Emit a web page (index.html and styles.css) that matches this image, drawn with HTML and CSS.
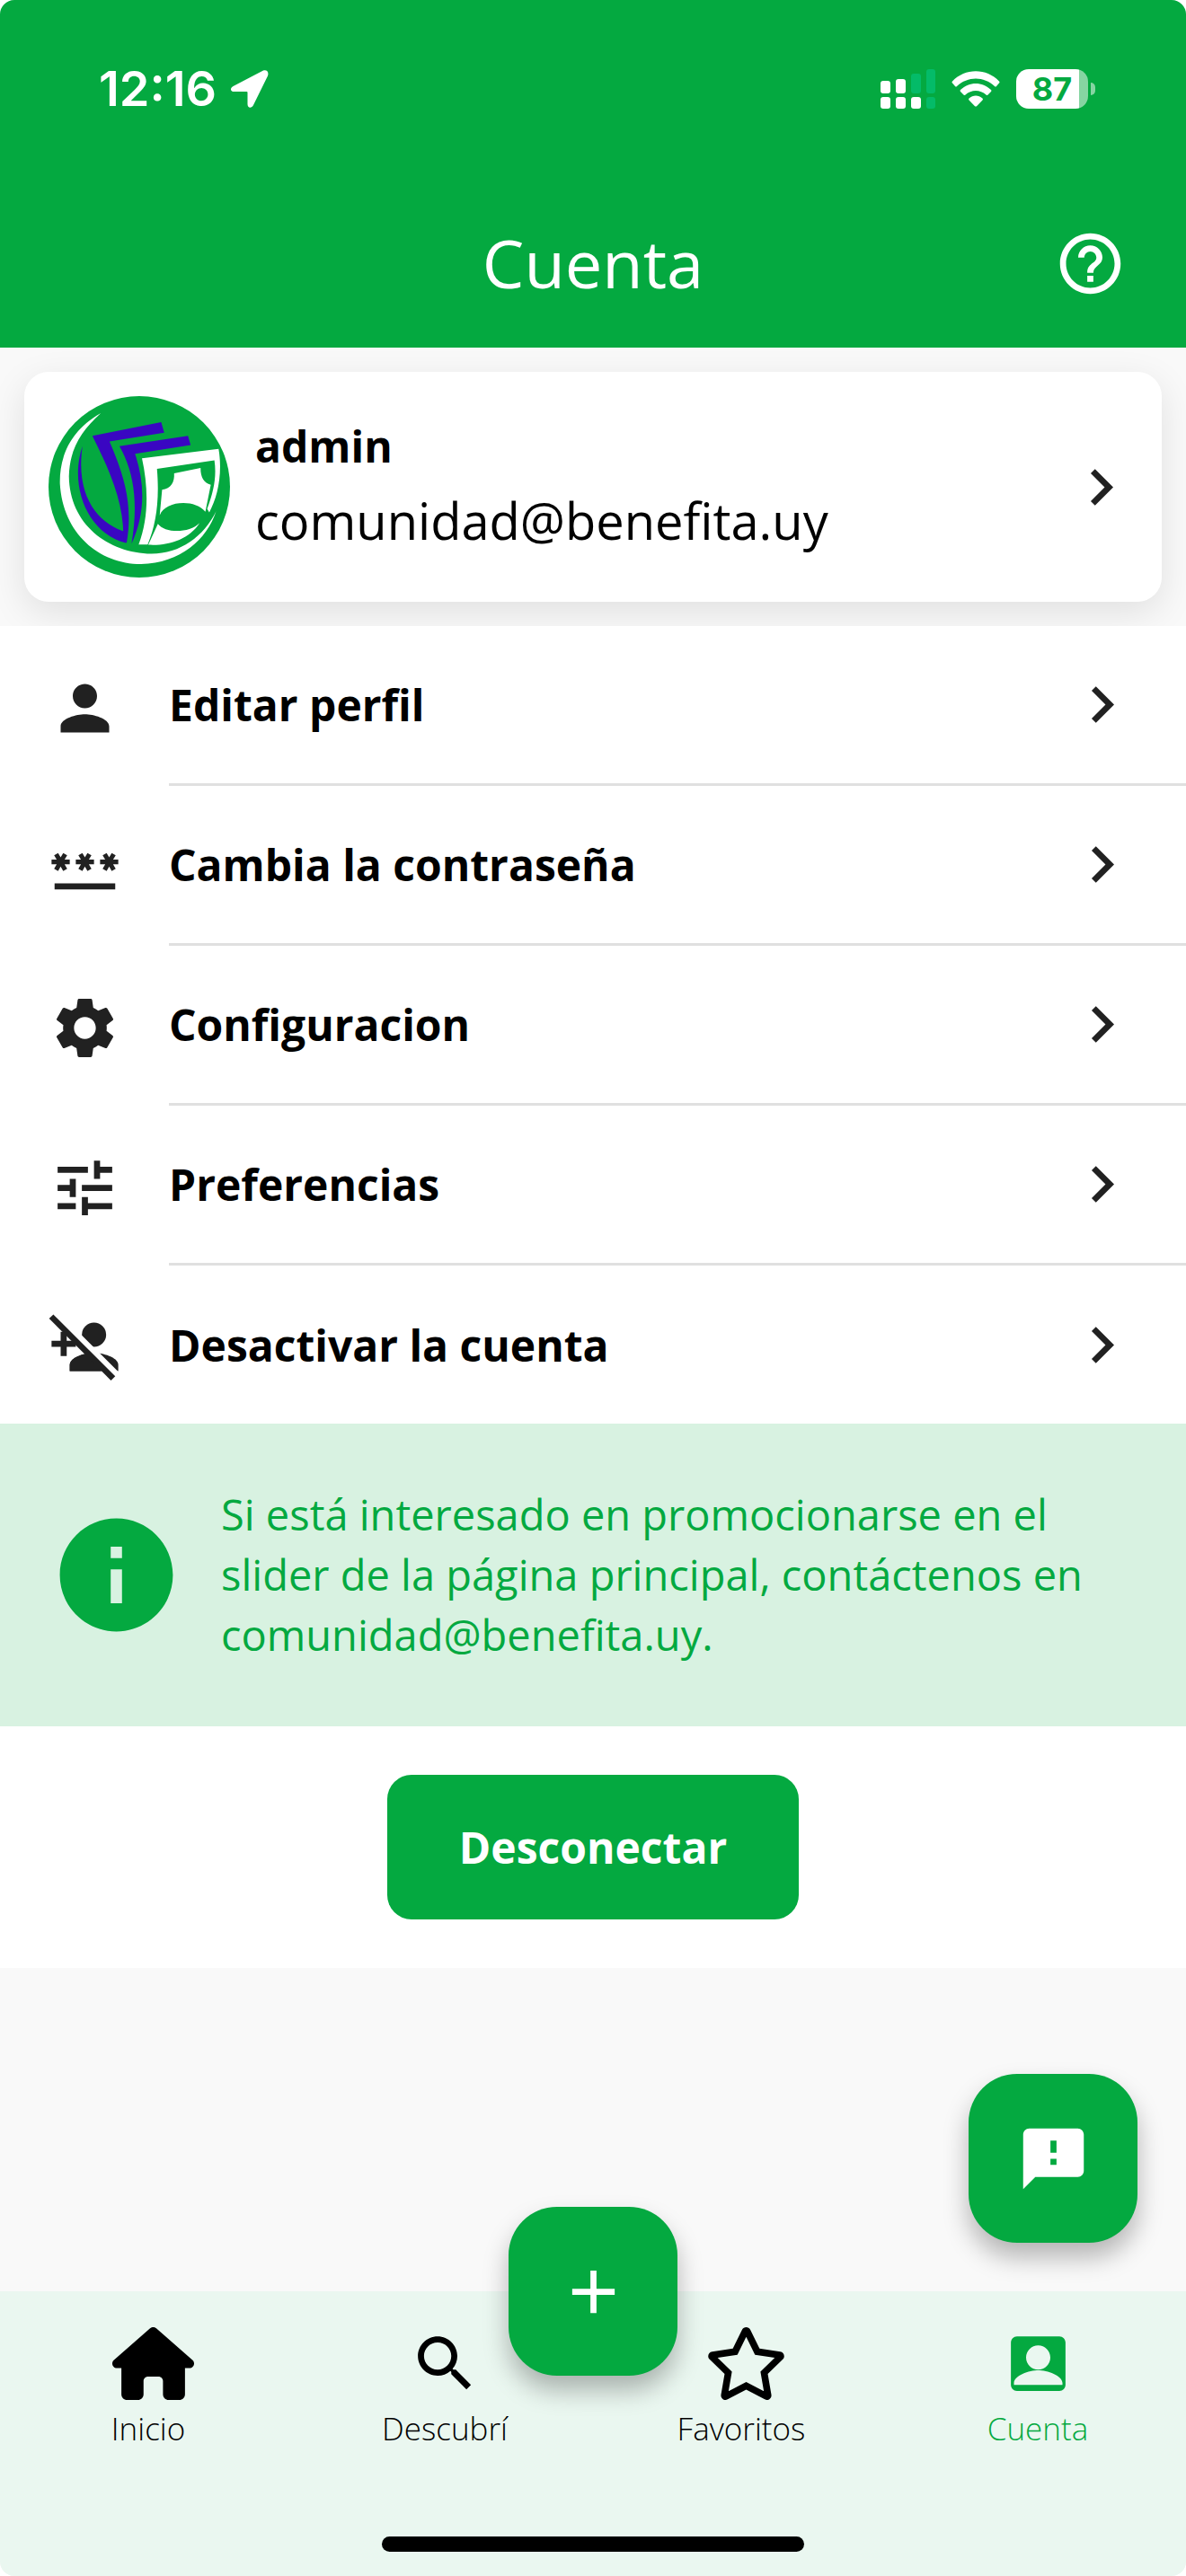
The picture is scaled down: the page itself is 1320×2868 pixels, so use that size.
FILE: index.html
```html
<!DOCTYPE html>
<html lang="es">
<head>
  <meta charset="UTF-8">
  <meta name="viewport" content="width=device-width, initial-scale=1">
  <title>Cuenta</title>
  <link rel="stylesheet" href="styles.css">
</head>
<body>
  <!-- Shared chevron used by the card and the menu rows -->
  <svg class="sprite" aria-hidden="true">
    <symbol id="chevron" viewBox="0 0 24 24">
      <path d="M10 6 8.59 7.41 13.17 12l-4.58 4.59L10 18l6-6z"/>
    </symbol>
  </svg>

  <div class="app">
    <header class="header">
      <div class="status-bar">
        <div class="status-left">
          <span class="time">12:16</span>
          <svg class="location" viewBox="0 0 42 42" aria-hidden="true">
            <path d="M35.500.8 2.500 18C-1.500 20.500-.5 24 3.500 24H17.500Q18.500 24 18.500 25V38C18.500 42.500 23 43 25 39L41 6.500C42.500 2.500 40-1 35.500.8z"/>
          </svg>
        </div>
        <div class="status-right">
          <svg class="signal" viewBox="0 0 61 44" aria-hidden="true">
            <g fill="#fff">
              <rect x="0" y="13" width="11" height="14" rx="3"/>
              <rect x="17" y="11" width="11" height="16" rx="3"/>
              <rect x="0" y="31" width="11" height="13" rx="3"/>
              <rect x="17" y="31" width="11" height="13" rx="3"/>
              <rect x="34" y="31" width="11" height="13" rx="3"/>
            </g>
            <g fill="#04bb68">
              <rect x="34" y="5" width="11" height="22" rx="3"/>
              <rect x="51" y="0" width="10" height="27" rx="3"/>
              <rect x="51" y="31" width="10" height="13" rx="3"/>
            </g>
          </svg>
          <svg class="wifi" viewBox="0 0 54 40" aria-hidden="true">
            <path d="M1 11.500C15-3.500 39-3.500 53 11.500Q54 12.500 53 13.500L50 17Q49 18 48 17C36 5.500 18 5.500 6 17Q5 18 4 17L1 13.500Q0 12.500 1 11.500z"/>
            <path d="M10 21C20 11.500 34 11.500 44 21Q45 22 44 23L40.500 26.500Q39.500 27.500 38.500 26.500C32 20.500 22 20.500 15.500 26.500Q14.500 27.500 13.500 26.500L10 23Q9 22 10 21z"/>
            <path d="M19.500 30.500C24 26.500 30 26.500 34.500 30.500Q35.500 31.500 34.500 32.500L28 39.200Q27 40 26 39.200L19.500 32.500Q18.500 31.500 19.500 30.500z"/>
          </svg>
          <div class="battery"><span class="battery-level">87</span></div>
        </div>
      </div>
      <div class="title-bar">
        <h1>Cuenta</h1>
        <button class="help" type="button" aria-label="Ayuda">
          <svg class="icon" viewBox="0 0 24 24">
            <path d="M11 18h2v-2h-2v2zm1-16C6.480 2 2 6.480 2 12s4.480 10 10 10 10-4.480 10-10S17.520 2 12 2zm0 18c-4.410 0-8-3.590-8-8s3.590-8 8-8 8 3.590 8 8-3.590 8-8 8zm0-14c-2.210 0-4 1.790-4 4h2c0-1.100.9-2 2-2s2 .9 2 2c0 2-3 1.750-3 5h2c0-2.250 3-2.500 3-5 0-2.210-1.790-4-4-4z"/>
          </svg>
        </button>
      </div>
    </header>

    <main>
      <section class="profile">
        <a class="card" href="#perfil">
          <svg class="avatar" viewBox="42 33 604 604" aria-hidden="true">
            <circle cx="344" cy="335" r="302" fill="#04a940"/>
            <g fill="#fff">
              <path d="M216 90C110 150 78 240 80 325C90 490 210 592 350 592C480 590 570 510 600 416C560 500 480 558 385 558C240 556 112 460 110 300C112 210 150 150 216 90z"/>
              <path d="M353 240L608 209C622 290 605 370 577 420L570 408C592 350 602 300 594 247L403 275C412 380 400 460 372 527L342 527C375 440 375 340 353 240z"/>
              <path d="M460 290L548 272C548 305 560 322 582 328L564 418C530 375 430 380 412 430L420 345C450 340 462 320 460 290z"/>
              <path d="M406 458C430 490 510 490 545 455C510 510 440 532 374 528z"/>
            </g>
            <g fill="#3a06c2">
              <path d="M155 200C110 330 170 490 300 522L300 486C210 460 130 370 155 200z"/>
              <path d="M188 165L417 120L427 155L245 184C290 290 325 390 302 522L291 512C295 390 245 280 188 165z"/>
              <path d="M278 200L506 165L515 196L330 225C365 330 362 430 318 525C340 400 330 290 278 200z"/>
            </g>
          </svg>
          <span class="card-text">
            <strong class="name">admin</strong>
            <span class="email">comunidad@benefita.uy</span>
          </span>
          <svg class="icon"><use href="#chevron"/></svg>
        </a>
      </section>

      <nav class="menu">
        <a class="menu-item" href="#editar">
          <svg class="icon menu-icon" viewBox="0 0 24 24">
            <path d="M12 12c2.210 0 4-1.790 4-4s-1.790-4-4-4-4 1.790-4 4 1.790 4 4 4zm0 2c-2.670 0-8 1.340-8 4v2h16v-2c0-2.660-5.330-4-8-4z"/>
          </svg>
          <span class="menu-label">Editar perfil<svg class="icon"><use href="#chevron"/></svg></span>
        </a>
        <a class="menu-item" href="#clave">
          <svg class="icon menu-icon" viewBox="0 0 24 24">
            <path d="M2 17h20v2H2v-2zm1.150-4.050L4 11.470l.85 1.480 1.300-.75-.85-1.480H7v-1.500H5.300l.85-1.470L4.850 7 4 8.470 3.150 7l-1.300.75.85 1.470H1v1.500h1.700l-.85 1.480 1.300.75zm6.700-.75l1.300.75.85-1.480.85 1.480 1.300-.75-.85-1.480H15v-1.500h-1.700l.85-1.470-1.300-.75L12 8.470 11.150 7l-1.300.75.85 1.470H9v1.500h1.700l-.85 1.480zM23 9.220h-1.700l.85-1.470-1.300-.75L20 8.470 19.150 7l-1.300.75.85 1.470H17v1.500h1.700l-.85 1.480 1.300.75.85-1.480.85 1.480 1.300-.75-.85-1.480H23v-1.500z"/>
          </svg>
          <span class="menu-label">Cambia la contraseña<svg class="icon"><use href="#chevron"/></svg></span>
        </a>
        <a class="menu-item" href="#configuracion">
          <svg class="icon menu-icon" viewBox="0 0 24 24">
            <path d="M19.140 12.940c.04-.3.060-.61.060-.94 0-.32-.02-.64-.07-.94l2.030-1.580c.18-.14.23-.41.12-.61l-1.920-3.320c-.12-.22-.37-.29-.59-.22l-2.390.96c-.5-.38-1.030-.7-1.620-.94l-.36-2.540c-.04-.24-.24-.41-.48-.41h-3.840c-.24 0-.43.17-.47.41l-.36 2.540c-.59.24-1.130.57-1.620.94l-2.390-.96c-.22-.08-.47 0-.59.22L2.740 8.870c-.12.21-.08.47.12.61l2.030 1.580c-.05.3-.09.63-.09.94s.02.64.07.94l-2.030 1.580c-.18.14-.23.41-.12.61l1.920 3.320c.12.22.37.29.59.22l2.390-.96c.5.38 1.030.7 1.620.94l.36 2.540c.05.24.24.41.48.41h3.840c.24 0 .44-.17.47-.41l.36-2.540c.59-.24 1.130-.56 1.620-.94l2.390.96c.22.080.47 0 .59-.22l1.920-3.320c.12-.22.070-.47-.12-.61l-2.010-1.580zM12 15.600c-1.980 0-3.600-1.620-3.600-3.600s1.620-3.600 3.600-3.600 3.600 1.620 3.600 3.600-1.620 3.600-3.600 3.600z"/>
          </svg>
          <span class="menu-label">Configuracion<svg class="icon"><use href="#chevron"/></svg></span>
        </a>
        <a class="menu-item" href="#preferencias">
          <svg class="icon menu-icon" viewBox="0 0 24 24">
            <path d="M3 17v2h6v-2H3zM3 5v2h10V5H3zm10 16v-2h8v-2h-8v-2h-2v6h2zM7 9v2H3v2h4v2h2V9H7zm14 4v-2H11v2h10zm-6-4h2V7h4V5h-4V3h-2v6z"/>
          </svg>
          <span class="menu-label">Preferencias<svg class="icon"><use href="#chevron"/></svg></span>
        </a>
        <a class="menu-item" href="#desactivar">
          <svg class="icon menu-icon" viewBox="0 0 24 24">
            <circle cx="15" cy="8" r="4"/>
            <path d="M15 14c-2.670 0-8 1.340-8 4v2h16v-2c0-2.660-5.330-4-8-4z"/>
            <path fill="#fff" d="M9 6.200 24 21.200V25L9 10z"/>
            <path d="M6 10V7H4v3H1v2h3v3h2v-3h3v-2z"/>
            <path d="M7 20v-2c0-1.800 2.400-3 4.800-3.600L17.400 20z"/>
            <path d="M.2 2.700 1.600 1.300 22 21.700 20.600 23.100z"/>
          </svg>
          <span class="menu-label">Desactivar la cuenta<svg class="icon"><use href="#chevron"/></svg></span>
        </a>
      </nav>

      <section class="info">
        <svg class="info-icon" viewBox="0 0 24 24" aria-hidden="true">
          <path d="M12 2C6.480 2 2 6.480 2 12s4.480 10 10 10 10-4.480 10-10S17.520 2 12 2zm1 15h-2v-6h2v6zm0-8h-2V7h2v2z"/>
        </svg>
        <p>Si está interesado en promocionarse en el slider de la página principal, contáctenos en comunidad@benefita.uy.</p>
      </section>

      <section class="logout">
        <button class="logout-button" type="button">Desconectar</button>
      </section>
    </main>

    <footer class="tab-bar">
      <button class="fab fab-feedback" type="button" aria-label="Comentarios">
        <svg class="icon" viewBox="0 0 24 24">
          <path d="M20 2H4c-1.100 0-1.990.9-1.990 2L2 22l4-4h14c1.100 0 2-.9 2-2V4c0-1.100-.9-2-2-2zm-7 12h-2v-2h2v2zm0-4h-2V6h2v4z"/>
        </svg>
      </button>
      <button class="fab fab-add" type="button" aria-label="Agregar">
        <svg class="icon" viewBox="0 0 24 24"><path d="M19 13h-6v6h-2v-6H5v-2h6V5h2v6h6v2z"/></svg>
      </button>
      <nav class="tabs">
        <a class="tab" href="#inicio">
          <span class="tab-icon">
            <svg class="icon-wide" viewBox="0 0 576 512">
              <path d="M576 255.500c0 18-14 32-32 32h-32V472c0 22-18 40-40 40h-75c-22 0-40-18-40-40v-93c0-18-14-32-32-32h-73c-18 0-32 14-32 32v93c0 22-18 40-40 40h-76c-22 0-40-18-40-40V287.500H32c-18 0-32-14-32-32 0-9 3-17 10-24L266 8c7-6 15-8 22-8s15 2 22 8l256 223.500c7 7 10 15 10 24z"/>
            </svg>
          </span>
          Inicio
        </a>
        <a class="tab" href="#descubri">
          <span class="tab-icon">
            <svg class="icon" viewBox="0 0 24 24">
              <path d="M15.500 14h-.79l-.28-.27C15.410 12.590 16 11.110 16 9.500 16 5.910 13.090 3 9.500 3S3 5.910 3 9.500 5.910 16 9.500 16c1.610 0 3.090-.59 4.230-1.570l.27.28v.79l5 4.990L20.490 19l-4.990-5zm-6 0C7.010 14 5 11.990 5 9.500S7.010 5 9.500 5 14 7.010 14 9.500 11.990 14 9.500 14z"/>
            </svg>
          </span>
          Descubrí
        </a>
        <a class="tab" href="#favoritos">
          <span class="tab-icon">
            <svg class="icon-wide" viewBox="0 0 576 512">
              <path d="M528.100 171.500L382 150.200 316.700 17.800c-11.700-23.600-45.600-23.900-57.400 0L194 150.200 47.900 171.500c-26.200 3.800-36.700 36.100-17.700 54.600l105.700 103-25 145.500c-4.500 26.300 23.200 46 46.400 33.700L288 439.600l130.700 68.700c23.200 12.200 50.900-7.400 46.400-33.700l-25-145.500 105.700-103c19-18.500 8.500-50.800-17.700-54.600zM388.600 312.300l23.700 138.400L288 385.400l-124.300 65.300 23.700-138.400-100.600-98 139-20.200 62.200-126 62.200 126 139 20.200-100.600 98z"/>
            </svg>
          </span>
          Favoritos
        </a>
        <a class="tab active" href="#cuenta">
          <span class="tab-icon">
            <svg class="icon" viewBox="0 0 24 24">
              <path d="M19 3H5c-1.100 0-2 .9-2 2v14c0 1.100.9 2 2 2h14c1.100 0 2-.9 2-2V5c0-1.100-.9-2-2-2zm-7 3c2.200 0 4 1.800 4 4s-1.800 4-4 4-4-1.800-4-4 1.800-4 4-4zm8 13H4v-.6c0-2.500 5-4.200 8-4.200s8 1.700 8 4.200v.6z"/>
            </svg>
          </span>
          Cuenta
        </a>
      </nav>
      <div class="home-indicator"></div>
    </footer>
  </div>
</body>
</html>
```
FILE: styles.css
```css
/* Global Styles */
* {
  margin: 0;
  padding: 0;
  box-sizing: border-box;
}
body {
  font-family: "Open Sans", "Noto Sans", sans-serif;
  background: #fff;
  color: #000;
}
a {
  color: inherit;
  text-decoration: none;
}
button {
  font-family: inherit;
  border: none;
  cursor: pointer;
}
.sprite {
  display: none;
}
.app {
  min-height: 100vh;
  display: flex;
  flex-direction: column;
  background: #f9f9f9;
  border-radius: 16px;
  overflow: hidden;
}
.icon {
  width: 81px;
  height: 81px;
  flex: none;
  display: block;
  fill: currentColor;
}
/* Header */
.header {
  background: #04a940;
  color: #fff;
}
.status-bar {
  display: flex;
  justify-content: space-between;
  align-items: center;
  padding: 64px 109px 0 110px;
}
.status-left,
.status-right {
  display: flex;
  align-items: center;
}
.status-left {
  gap: 16px;
}
.status-right {
  gap: 18px;
}
.time {
  font-family: Inter, "Liberation Sans", sans-serif;
  font-size: 54px;
  line-height: 70px;
  font-weight: 600;
}
.location {
  width: 42px;
  height: 42px;
  fill: #fff;
}
.signal {
  width: 61px;
  height: 44px;
}
.wifi {
  width: 54px;
  height: 40px;
  fill: #fff;
}
.battery {
  position: relative;
  width: 80px;
  height: 44px;
  border-radius: 14px;
  background: linear-gradient(90deg, #fff 87%, #86d5a2 87%);
  text-align: center;
}
.battery::after {
  content: "";
  position: absolute;
  left: 83px;
  top: 15px;
  width: 5px;
  height: 14px;
  border-radius: 0 5px 5px 0;
  background: #86d5a2;
}
.battery-level {
  font-family: Inter, "Liberation Sans", sans-serif;
  font-size: 36px;
  line-height: 44px;
  font-weight: 700;
  color: #04a940;
}
.title-bar {
  display: grid;
  grid-template-columns: 1fr auto 1fr;
  align-items: center;
  padding: 92px 66px 27px;
}
.title-bar h1 {
  grid-column: 2;
  font-size: 74px;
  line-height: 134px;
  font-weight: 400;
}
.help {
  justify-self: end;
  background: none;
  color: #fff;
}
/* Profile card */
.profile {
  padding: 27px;
  overflow: hidden;
}
.card {
  display: flex;
  align-items: center;
  padding: 27px;
  background: #fff;
  border-radius: 27px;
  box-shadow: 0 12px 40px rgba(0, 0, 0, 0.1);
  color: #212121;
}
.avatar {
  width: 202px;
  height: 202px;
  flex: none;
}
.card-text {
  flex: 1;
  padding: 0 0 6px 28px;
  color: #000;
}
.name,
.email {
  display: block;
}
.name {
  font-size: 48px;
  line-height: 80px;
  font-weight: 700;
}
.email {
  font-size: 56px;
  line-height: 84px;
}
/* Menu */
.menu {
  background: #fff;
}
.menu-item {
  display: flex;
  align-items: center;
  padding-left: 54px;
  color: #212121;
}
.menu-icon {
  margin-top: 4px;
}
.menu-label {
  flex: 1;
  display: flex;
  justify-content: space-between;
  align-items: center;
  height: 178px;
  margin-left: 53px;
  padding-right: 53px;
  border-bottom: 3px solid #e0e0e0;
  font-size: 48px;
  font-weight: 700;
  color: #000;
}
.menu-label .icon {
  color: #212121;
}
.menu-item:last-child .menu-label {
  height: 176px;
  border-bottom: none;
}
/* Info banner */
.info {
  display: flex;
  align-items: center;
  gap: 41px;
  padding: 68px 54px;
  background: #d8f2e1;
  color: #04a940;
}
.info-icon {
  width: 151px;
  height: 151px;
  flex: none;
  fill: #04a940;
}
.info p {
  font-size: 47px;
  line-height: 67px;
}
/* Logout */
.logout {
  display: flex;
  justify-content: center;
  padding: 54px;
  background: #fff;
}
.logout-button {
  padding: 0 80px;
  border-radius: 27px;
  background: #04a940;
  color: #fff;
  font-size: 48px;
  line-height: 161px;
  font-weight: 700;
}
/* Bottom tabs */
.tab-bar {
  position: relative;
  margin-top: auto;
  padding: 40px 0 27px;
  background: #eaf7f0;
}
.tabs {
  display: grid;
  grid-template-columns: repeat(4, 1fr);
}
.tab {
  display: flex;
  flex-direction: column;
  align-items: center;
  gap: 9px;
  font-size: 35px;
  line-height: 45px;
  font-weight: 300;
}
.tab-icon {
  width: 81px;
}
.icon-wide {
  display: block;
  width: 91px;
  height: 81px;
}
.active {
  color: #04a940;
}
.home-indicator {
  width: 470px;
  height: 17px;
  margin: 98px auto 0;
  border-radius: 9px;
  background: #000;
}
/* Floating buttons */
.fab {
  position: absolute;
  display: flex;
  align-items: center;
  justify-content: center;
  width: 188px;
  height: 188px;
  border-radius: 54px;
  background: #04a940;
  color: #fff;
  box-shadow: 0 16px 28px rgba(0, 0, 0, 0.28);
}
.fab-add {
  top: -94px;
  left: calc(50% - 94px);
}
.fab-feedback {
  top: -242px;
  right: 54px;
}
```
